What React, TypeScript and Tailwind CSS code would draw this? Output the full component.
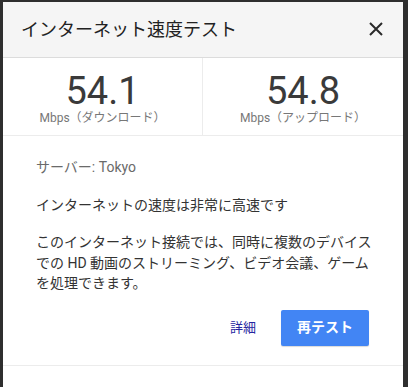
const font = { fontFamily: 'Roboto, "Noto Sans CJK JP", Arial, sans-serif' };

export default function App() {
  return (
    <div className="h-[387px] w-[408px] bg-[#2e2e2e] pt-[2px] pl-[3px] pr-[5px]" style={font}>
      <div className="flex h-full w-[400px] flex-col bg-white">
        {/* Header */}
        <div className="flex h-[56px] shrink-0 items-center justify-between border-b border-[#dcdcdc] bg-[#f5f5f5] pl-[18px] pr-[20px]">
          <h1 className="text-[18px] leading-6 text-[#222]">インターネット速度テスト</h1>
          <svg width="14" height="14" viewBox="0 0 14 14" className="mt-[-2px]">
            <path d="M1 1 L13 13 M13 1 L1 13" stroke="#2a2a2a" strokeWidth="2" />
          </svg>
        </div>

        {/* Stats */}
        <div className="grid h-[78px] shrink-0 grid-cols-2 border-b border-[#ececec]">
          <div className="flex flex-col items-center border-r border-[#ececec] pt-[13px]">
            <div className="text-[38px] leading-[40px] text-[#3a3a3a]">54.1</div>
            <div className="text-[12px] leading-[14px] text-[#777]">Mbps（ダウンロード）</div>
          </div>
          <div className="flex flex-col items-center pt-[13px]">
            <div className="text-[38px] leading-[40px] text-[#3a3a3a]">54.8</div>
            <div className="text-[12px] leading-[14px] text-[#777]">Mbps（アップロード）</div>
          </div>
        </div>

        {/* Body */}
        <div className="flex flex-col pl-[33px] pr-[26px] pt-[21px]">
          <p className="text-[14px] leading-5 text-[#6a6a6a]">サーバー: Tokyo</p>
          <p className="mt-[18px] text-[14px] leading-5 text-[#333]">インターネットの速度は非常に高速です</p>
          <p className="mt-[17px] text-[14px] leading-[20.5px] text-[#333]">
            このインターネット接続では、同時に複数のデバイスでの HD 動画のストリーミング、ビデオ会議、ゲームを処理できます。
          </p>
        </div>

        {/* Actions */}
        <div className="flex items-center justify-end gap-[25px] border-b border-[#ececec] pt-[16px] pr-[34px] pb-[19px]">
          <a className="text-[13px] leading-5 text-[#2626a0]">詳細</a>
          <button className="h-[36px] w-[88px] rounded-[2px] bg-[#4285f4] text-[14px] font-bold text-white shadow-[0_1px_1px_rgba(0,0,0,0.15)]">
            再テスト
          </button>
        </div>
      </div>
    </div>
  );
}
